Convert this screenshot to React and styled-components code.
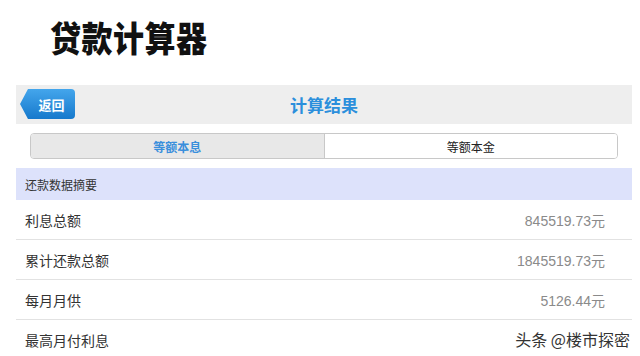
import React from "react"
import styled, { createGlobalStyle } from "styled-components"

const GlobalStyle = createGlobalStyle`
  body {
    margin: 0;
    background: #fff;
    font-family: "Liberation Sans", "Noto Sans CJK SC", sans-serif;
  }
`

const rows = [
  { label: "利息总额", value: "845519.73元" },
  { label: "累计还款总额", value: "1845519.73元" },
  { label: "每月月供", value: "5126.44元" },
  { label: "最高月付利息", value: "" },
]

const App = () => {
  return (
    <Page>
      <GlobalStyle />
      <Title>贷款计算器</Title>
      <Panel>
        <NavBar>
          <BackButton>返回</BackButton>
          <NavTitle>计算结果</NavTitle>
        </NavBar>
        <SegmentWrap>
          <Segmented>
            <Segment active>等额本息</Segment>
            <Segment>等额本金</Segment>
          </Segmented>
        </SegmentWrap>
        <SectionHeader>还款数据摘要</SectionHeader>
        {rows.map(row => (
          <Row key={row.label}>
            <Label>{row.label}</Label>
            <Value>{row.value}</Value>
          </Row>
        ))}
      </Panel>
      <Watermark>头条 @楼市探密</Watermark>
    </Page>
  )
}

const Page = styled.div`
  position: relative;
  width: 640px;
  height: 356px;
  overflow: hidden;
  background: #fff;
`

const Title = styled.h1`
  margin: 0;
  padding: 12px 0 0 50px;
  height: 73px;
  box-sizing: border-box;
  font-family: "Noto Sans CJK SC", serif;
  font-weight: 900;
  font-size: 31px;
  line-height: 40px;
  letter-spacing: 0.5px;
  color: #111;
  transform: scaleY(1.15);
  transform-origin: top left;
`

const Panel = styled.div`
  margin: 12px 8px 0 16px;
`

const NavBar = styled.div`
  position: relative;
  height: 39px;
  background: #eeeeee;
  display: flex;
  align-items: center;
  justify-content: center;
`

const BackButton = styled.button`
  position: absolute;
  left: 4px;
  top: 4px;
  width: 55px;
  height: 30px;
  padding: 0 0 0 8px;
  border: none;
  border-radius: 0 4px 4px 0;
  background: linear-gradient(#44a6ec, #1679cc);
  clip-path: polygon(8px 0, 100% 0, 100% 100%, 8px 100%, 0 50%);
  color: #fff;
  font-family: "Noto Sans CJK SC", sans-serif;
  font-weight: 700;
  font-size: 13px;
`

const NavTitle = styled.div`
  font-family: "Noto Sans CJK SC", sans-serif;
  font-weight: 700;
  font-size: 17px;
  color: #2b8fdc;
`

const SegmentWrap = styled.div`
  padding: 9px 14px;
`

const Segmented = styled.div`
  display: flex;
  height: 26px;
  border: 1px solid #c8c8c8;
  border-radius: 4px;
  overflow: hidden;
  box-sizing: border-box;
`

const Segment = styled.div`
  flex: 1;
  display: flex;
  align-items: center;
  justify-content: center;
  font-family: "Noto Sans CJK SC", sans-serif;
  font-size: 12px;
  font-weight: ${props => (props.active ? 700 : 400)};
  color: ${props => (props.active ? "#3a8fdc" : "#222")};
  background: ${props => (props.active ? "#e8e8e8" : "#fff")};
  & + & {
    border-left: 1px solid #c8c8c8;
  }
`

const SectionHeader = styled.div`
  height: 32px;
  padding-left: 9px;
  display: flex;
  align-items: center;
  background: #dde2fb;
  font-family: "Noto Sans CJK SC", sans-serif;
  font-size: 12px;
  color: #333;
`

const Row = styled.div`
  height: 40px;
  padding: 0 27px 0 9px;
  display: flex;
  align-items: center;
  justify-content: space-between;
  border-bottom: 1px solid #e2e2e2;
  box-sizing: border-box;
`

const Label = styled.span`
  font-family: "Noto Sans CJK SC", sans-serif;
  font-size: 14px;
  color: #333;
`

const Value = styled.span`
  font-family: "Liberation Sans", "Noto Sans CJK SC", sans-serif;
  font-size: 14px;
  color: #8a8a8a;
`

const Watermark = styled.div`
  position: absolute;
  right: 10px;
  bottom: 5px;
  font-family: "Noto Sans CJK SC", sans-serif;
  font-size: 16px;
  color: #333;
  text-shadow: 0 0 2px #fff, 0 0 2px #fff;
`

export default App
